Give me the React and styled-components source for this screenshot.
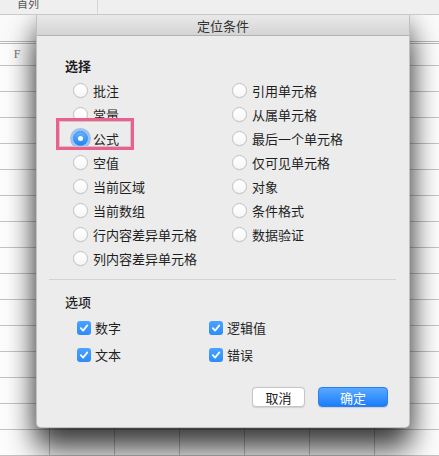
import React from "react";
import styled, { createGlobalStyle } from "styled-components";

const Global = createGlobalStyle`
  html, body { margin: 0; padding: 0; background: #ffffff; }
  body { font-family: "Noto Sans CJK SC", "Noto Sans", sans-serif; }
  * { box-sizing: border-box; }
`;

const Page = styled.div`
  position: relative;
  width: 439px;
  height: 456px;
  overflow: hidden;
  background: #fdfdfd;
`;

const Sheet = styled.div`
  display: flex;
  flex-direction: column;
`;

const TopBar = styled.div`
  position: relative;
  z-index: 3;
  height: 15px;
  display: flex;
  background: #efefef;
  border-bottom: 1px solid #c9c9c9;
  overflow: hidden;
`;

const TopCell = styled.div`
  width: ${(p) => p.w}px;
  border-right: ${(p) => (p.divider ? "1px solid #d6d6d6" : "none")};
  padding-left: 17px;
  font-size: 11px;
  line-height: 11px;
  color: #555;
  margin-top: -2px;
`;

const Blank = styled.div`
  height: 26px;
  background: #fafafa;
`;

const DoubleRule = styled.div`
  height: 3px;
  border-top: 1px solid #b9b9b9;
  border-bottom: 1px solid #b9b9b9;
`;

const Row = styled.div`
  display: flex;
  margin-left: -15px;
  height: ${(p) => p.h}px;
  border-bottom: 1px solid #c3c3c3;
`;

const Cell = styled.div`
  flex: 0 0 65px;
  border-right: 1px solid #c3c3c3;
  display: flex;
  align-items: center;
  justify-content: center;
  font-family: "Liberation Serif", serif;
  font-size: 12px;
  color: #777;
`;

const Dialog = styled.div`
  position: absolute;
  z-index: 2;
  left: 36px;
  top: 15px;
  width: 374px;
  height: 413px;
  background: #ececec;
  border: 1px solid rgba(0, 0, 0, 0.18);
  border-top: none;
  border-radius: 0 0 5px 5px;
  box-shadow: 0 22px 30px rgba(0, 0, 0, 0.7), 0 4px 24px rgba(0, 0, 0, 0.3);
  display: flex;
  flex-direction: column;
`;

const TitleBar = styled.div`
  height: 21px;
  flex: 0 0 21px;
  background: linear-gradient(#e9e9e9, #d4d4d4);
  border-bottom: 1px solid #b4b4b4;
  display: flex;
  align-items: center;
  justify-content: center;
  font-size: 13px;
  color: #333;
  line-height: 1;
`;

const Body = styled.div`
  padding: 21px 12px 0 12px;
  display: flex;
  flex-direction: column;
`;

const Section = styled.div`
  padding-left: 16px;
  display: flex;
  flex-direction: column;
`;

const Heading = styled.div`
  height: 18px;
  line-height: 18px;
  font-size: 13px;
  font-weight: ${(p) => (p.bold ? 700 : 500)};
  color: #1e1e1e;
  margin-bottom: 3px;
`;

const RadioGrid = styled.div`
  display: grid;
  grid-template-columns: 159px 159px;
  grid-template-rows: repeat(8, 24px);
  grid-auto-flow: column;
  margin-left: 8px;
`;

const OptionRow = styled.label`
  display: flex;
  align-items: center;
  gap: 5px;
  font-size: 13px;
  color: #1f1f1f;
  white-space: nowrap;
`;

const RadioCircle = styled.span`
  position: relative;
  width: 15px;
  height: 15px;
  border-radius: 50%;
  flex: 0 0 15px;
  background: ${(p) =>
    p.checked ? "linear-gradient(#66b4ff, #1f86f7)" : "linear-gradient(#ffffff, #f7f7f7)"};
  border: 1px solid ${(p) => (p.checked ? "#2a84ea" : "#c2c2c2")};
  box-shadow: ${(p) =>
    p.checked ? "0 0 0 3px rgba(90, 160, 245, 0.55)" : "0 0.5px 1px rgba(0,0,0,0.08)"};
  &::after {
    content: "";
    display: ${(p) => (p.checked ? "block" : "none")};
    position: absolute;
    left: 50%;
    top: 50%;
    width: 5px;
    height: 5px;
    margin: -2.5px 0 0 -2.5px;
    border-radius: 50%;
    background: #fff;
  }
`;

const Highlight = styled.div`
  position: absolute;
  z-index: 4;
  left: 56px;
  top: 118px;
  width: 78px;
  height: 32px;
  border: 3px solid #ef5f8d;
  box-shadow: inset 0 0 0 1px #c8c8c8;
  pointer-events: none;
`;

const Separator = styled.div`
  height: 1px;
  background: #d3d3d3;
  margin: 9px 1px 13px 0;
`;

const CheckGrid = styled.div`
  display: grid;
  grid-template-columns: 132px 132px;
  grid-auto-rows: 27px;
  margin-left: 12px;
`;

const CheckRow = styled.label`
  display: flex;
  align-items: center;
  gap: 4px;
  font-size: 13px;
  color: #1f1f1f;
`;

const CheckBox = styled.span`
  width: 14px;
  height: 14px;
  flex: 0 0 14px;
  border-radius: 3px;
  background: linear-gradient(#4aa3ff, #2d8cf8);
  display: flex;
  align-items: center;
  justify-content: center;
`;

const Buttons = styled.div`
  display: flex;
  justify-content: flex-end;
  gap: 13px;
  margin-top: 19px;
  padding-right: 9px;
`;

const Button = styled.button`
  height: 20px;
  width: ${(p) => p.w}px;
  border-radius: 4px;
  font-family: "Noto Sans CJK SC", "Noto Sans", sans-serif;
  font-size: 13px;
  line-height: 1;
  padding: 0;
  color: ${(p) => (p.primary ? "#fff" : "#222")};
  background: ${(p) =>
    p.primary ? "linear-gradient(#59a9ff, #1a7dfb)" : "#fff"};
  border: 1px solid ${(p) => (p.primary ? "#2a7fe8" : "#c6c6c6")};
  box-shadow: 0 0.5px 1px rgba(0, 0, 0, 0.12);
`;

const Check = () => (
  <svg width="10" height="10" viewBox="0 0 10 10">
    <path d="M1.8 5.2 L4.1 7.6 L8.3 2.4" fill="none" stroke="#fff" strokeWidth="1.7" strokeLinecap="round" strokeLinejoin="round" />
  </svg>
);

const leftRadios = ["批注", "常量", "公式", "空值", "当前区域", "当前数组", "行内容差异单元格", "列内容差异单元格"];
const rightRadios = ["引用单元格", "从属单元格", "最后一个单元格", "仅可见单元格", "对象", "条件格式", "数据验证"];
const checks = ["数字", "逻辑值", "文本", "错误"];

export default function App() {
  const rows = Array.from({ length: 15 });
  const cols = Array.from({ length: 8 });
  return (
    <Page>
      <Global />
      <Sheet>
        <TopBar>
          <TopCell w={98} divider>首列</TopCell>
          <TopCell w={341} />
        </TopBar>
        <Blank />
        <DoubleRule />
        <Row h={22}>
          {cols.map((_, i) => (
            <Cell key={i}>{i === 0 ? "F" : ""}</Cell>
          ))}
        </Row>
        {rows.map((_, r) => (
          <Row key={r} h={26}>
            {cols.map((_, i) => (
              <Cell key={i} />
            ))}
          </Row>
        ))}
      </Sheet>

      <Dialog>
        <TitleBar>定位条件</TitleBar>
        <Body>
          <Section>
            <Heading bold>选择</Heading>
            <RadioGrid>
              {leftRadios.map((t) => (
                <OptionRow key={t}>
                  <RadioCircle checked={t === "公式"} />
                  {t}
                </OptionRow>
              ))}
              {rightRadios.map((t) => (
                <OptionRow key={t}>
                  <RadioCircle />
                  {t}
                </OptionRow>
              ))}
            </RadioGrid>
          </Section>
          <Separator />
          <Section>
            <Heading>选项</Heading>
            <CheckGrid>
              {checks.map((t) => (
                <CheckRow key={t}>
                  <CheckBox>
                    <Check />
                  </CheckBox>
                  {t}
                </CheckRow>
              ))}
            </CheckGrid>
          </Section>
          <Buttons>
            <Button w={53}>取消</Button>
            <Button w={70} primary>确定</Button>
          </Buttons>
        </Body>
      </Dialog>
      <Highlight />
    </Page>
  );
}
